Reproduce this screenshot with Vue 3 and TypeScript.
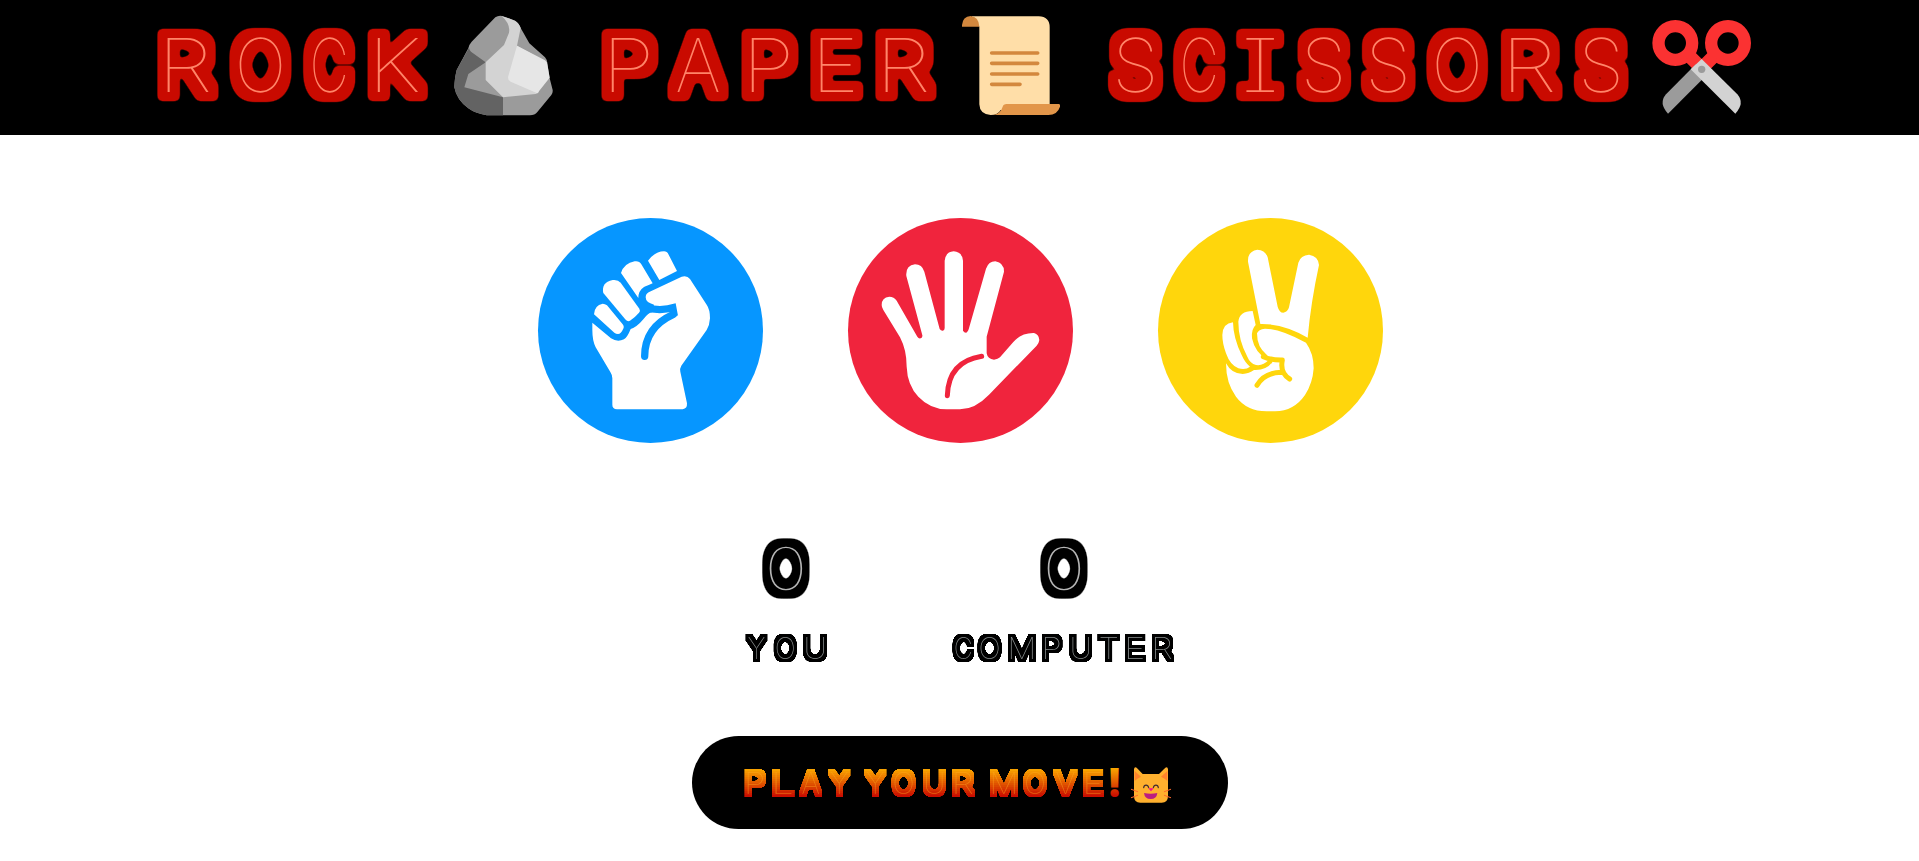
<script setup lang="ts">
interface Glyph { ch: string; x: number; len: number }
interface Word { box: string; w: number; h: number; size: number; base: number; glyphs: Glyph[] }

const ctx = document.createElement('canvas').getContext('2d')!

// Fits each thin letter into its [left, right] slot, leaving `pad` for the thick outline.
function fit(text: string, slots: number[][], size: number, base: number, pad: number, x: number, y: number, w: number, h: number): Word {
  ctx.font = `100 ${size}px Inter`
  let i = 0
  const glyphs = [...text].map((ch) => {
    if (ch === ' ') return { ch, x: 0, len: 0 }
    const [l, r] = slots[i++]
    const m = ctx.measureText(ch)
    if (ch === 'I') return { ch, x: l + pad - 5, len: r - l - pad * 2 + 10 }
    const ink = m.actualBoundingBoxRight + m.actualBoundingBoxLeft
    const k = (r - l - pad * 2) / ink
    return { ch, x: l + pad + m.actualBoundingBoxLeft * k, len: m.width * k }
  })
  return { box: `${x} ${y} ${w} ${h}`, w, h, size, base, glyphs }
}

const rock = fit('ROCK', [[157, 220], [229, 291.5], [303, 356], [367, 428.5]], 74, 92, 10.3, 150, 0, 298, 135)
const paper = fit('PAPER', [[601, 659], [667, 729], [741, 799], [810, 863.5], [875, 938]], 74, 92, 10.3, 590, 0, 366, 135)
const scissors = fit('SCISSORS', [[1107, 1163.5], [1173, 1226], [1235, 1285.5], [1295.5, 1351.5], [1360, 1416], [1426, 1488], [1500.5, 1564], [1573, 1629]], 74, 92, 10.3, 1100, 0, 546, 135)

const scores = [
  {
    name: 'you',
    value: fit('0', [[761, 811]], 59, 589.5, 8.4, 736, 530, 100, 76),
    label: fit('YOU', [[744, 769], [773, 798], [802, 828]], 30, 658.5, 3.6, 736, 626, 100, 44),
  },
  {
    name: 'computer',
    value: fit('0', [[1039, 1089]], 59, 589.5, 8.4, 944, 530, 240, 76),
    label: fit('COMPUTER', [[952, 975], [977, 1003], [1007, 1037], [1041, 1064], [1068, 1093], [1096, 1121], [1124, 1147], [1151, 1176]], 30, 658.5, 3.6, 944, 626, 240, 44),
  },
]

const message = fit('PLAY YOUR MOVE', [
  [743.7, 767.5], [771.5, 795], [798, 823.5], [826.5, 852],
  [862.5, 888], [891, 917], [921.5, 946.5], [951.5, 977],
  [989, 1019], [1022.5, 1048], [1052, 1079], [1082.5, 1105],
], 30, 793.5, 3.6, 736, 736, 392, 93)

// Horizontal colour bands, top to bottom, softened into one flame gradient.
const bands = Array.from({ length: 18 }, (_, i) => {
  const t = Math.min(1, Math.max(0, (i * 2 - 3) / 28))
  return { y: 765 + i * 2, color: `rgb(${Math.round(250 - 50 * t)}, ${Math.round(168 - 160 * t)}, 0)` }
})
</script>

<template>
  <main class="game">
    <svg class="defs" width="0" height="0" aria-hidden="true">
      <defs>
        <filter id="title" x="-10%" y="-30%" width="120%" height="160%" color-interpolation-filters="sRGB">
          <feMorphology in="SourceAlpha" operator="dilate" radius="8 7" />
          <feGaussianBlur stdDeviation="2" />
          <feComponentTransfer result="fat"><feFuncA type="linear" slope="7" intercept="-0.6" /></feComponentTransfer>
          <feFlood flood-color="#c90a00" />
          <feComposite in2="fat" operator="in" result="body" />
          <feMerge><feMergeNode in="body" /><feMergeNode in="SourceGraphic" /></feMerge>
        </filter>
        <filter id="digit" x="-50%" y="-30%" width="200%" height="160%" color-interpolation-filters="sRGB">
          <feMorphology in="SourceAlpha" operator="dilate" radius="5 6" />
          <feGaussianBlur stdDeviation="2.1" />
          <feComponentTransfer result="body"><feFuncA type="linear" slope="8" intercept="-0.6" /></feComponentTransfer>
          <feMerge><feMergeNode in="body" /><feMergeNode in="SourceGraphic" /></feMerge>
        </filter>
        <filter id="label" x="-20%" y="-30%" width="140%" height="160%" color-interpolation-filters="sRGB">
          <feMorphology in="SourceAlpha" operator="dilate" radius="3 3" />
          <feGaussianBlur stdDeviation="0.6" />
          <feComponentTransfer result="body"><feFuncA type="linear" slope="4" intercept="-0.5" /></feComponentTransfer>
          <feMerge><feMergeNode in="body" /><feMergeNode in="SourceGraphic" /></feMerge>
        </filter>
        <filter id="fire" filterUnits="userSpaceOnUse" x="736" y="760" width="392" height="44" color-interpolation-filters="sRGB">
          <feMorphology in="SourceAlpha" operator="dilate" radius="3 3" />
          <feGaussianBlur stdDeviation="0.6" />
          <feComponentTransfer result="mask"><feFuncA type="linear" slope="4" intercept="-0.5" /></feComponentTransfer>
          <feFlood v-for="(b, i) in bands" :key="b.y" x="736" :y="b.y" width="392" height="2" :flood-color="b.color" :result="`band${i}`" />
          <feMerge x="736" y="760" width="392" height="44"><feMergeNode v-for="(b, i) in bands" :key="b.y" :in="`band${i}`" /></feMerge>
          <feComposite in2="mask" operator="in" result="body" />
          <feFlood flood-color="#ffa51e" flood-opacity="0.5" />
          <feComposite in2="SourceAlpha" operator="in" result="line" />
          <feMerge><feMergeNode in="body" /><feMergeNode in="line" /></feMerge>
        </filter>
        <linearGradient id="flame" gradientUnits="userSpaceOnUse" x1="0" y1="768" x2="0" y2="797">
          <stop offset="0" stop-color="#faa800" />
          <stop offset="1" stop-color="#c80800" />
        </linearGradient>
      </defs>
    </svg>

    <header class="banner">
      <svg class="word" :width="rock.w" :height="rock.h" :viewBox="rock.box">
        <text class="title" :y="rock.base"><tspan v-for="(g, i) in rock.glyphs" :key="i" :x="g.x" :textLength="g.len" lengthAdjust="spacingAndGlyphs">{{ g.ch }}</tspan></text>
      </svg>
      <svg class="emoji rock" viewBox="924 24 330 336">
        <path fill="#9b9b9b" d="M1066 52Q1078 44 1092 50L1125 62Q1138 70 1142 84L1168 130L1215 172Q1221 178 1222 190L1229 235L1238 270Q1239 278 1234 285L1192 336Q1184 346 1170 346H1040Q1005 340 985 325Q950 300 943 262Q943 240 950 210L985 145Q988 132 995 125Z" />
        <path fill="#636363" d="M987 143Q988 150 993 155L1037 187L985 222L973 262H943Q943 235 950 210ZM943 262H973L1089 292V346H1040Q1005 340 985 325Q950 300 943 262Z" />
        <path fill="#d3d3d3" d="M1085 48L1092 50L1125 62Q1138 70 1142 84L1131 137L1222 188L1195 278L1187 282L1089 292L1037 240V187L1092 135L1107 98Q1112 72 1085 48Z" />
        <path fill="#e6e6e6" d="M1131 137L1215 181Q1221 185 1222 193L1229 233L1192 280L1112 245Q1102 240 1105 228Z" />
      </svg>
      <svg class="word paper-word" :width="paper.w" :height="paper.h" :viewBox="paper.box">
        <text class="title" :y="paper.base"><tspan v-for="(g, i) in paper.glyphs" :key="i" :x="g.x" :textLength="g.len" lengthAdjust="spacingAndGlyphs">{{ g.ch }}</tspan></text>
      </svg>
      <svg class="emoji" viewBox="1128 24 330 336">
        <path fill="#ffdea8" d="M1175 49H1376Q1409 50 1409 82V330H1262Q1254 345 1232 345Q1199 343 1198 313V80Z" />
        <path fill="#d3883e" d="M1146 80V75Q1148 50 1172 48Q1196 50 1198 80Z" />
        <path fill="#e2964a" d="M1241 345Q1262 340 1268 320Q1270 312 1280 312H1437Q1441 313 1440 320Q1432 345 1405 345Z" />
        <path stroke="#d3883e" stroke-width="11" stroke-linecap="round" d="M1235 159H1373M1235 190H1373M1235 222H1373M1235 253H1320" />
      </svg>
      <svg class="word scissors-word" :width="scissors.w" :height="scissors.h" :viewBox="scissors.box">
        <text class="title" :y="scissors.base"><tspan v-for="(g, i) in scissors.glyphs" :key="i" :x="g.x" :textLength="g.len" lengthAdjust="spacingAndGlyphs">{{ g.ch }}</tspan></text>
      </svg>
      <svg class="emoji" viewBox="618 24 330 336">
        <g fill="none" stroke="#fb3232" stroke-width="37">
          <circle cx="706" cy="129" r="50.5" /><circle cx="864" cy="129" r="50.5" />
          <path d="M748 168L790 210M822 168L780 210" stroke-width="40" />
        </g>
        <path fill="#9b9b9b" d="M768 192L678 283Q655 310 684 341L800 225Z" />
        <path fill="#d3d3d3" d="M785 177L892 283Q915 310 886 341L752 208Z" />
        <circle cx="785" cy="208" r="11" fill="#9b9b9b" />
      </svg>
    </header>

    <section class="choices">
      <button class="choice blue" aria-label="Rock">
        <svg viewBox="24 24 675 675">
          <g fill="#fff">
            <path d="M354 152Q375 124 402 124Q411 124 416 134L441 183L388 210Z" />
            <path d="M273 189Q282 160 314 154Q328 152 334 163L368 220Q350 228 342 231Q325 242 325 264Z" />
            <path d="M220 249Q213 218 248 210Q264 208 272 218L328 296Q332 302 327 308Q315 322 300 332Q293 336 287 329Z" />
            <path d="M192 313Q193 286 218 281Q225 281 231 286L278 343Q284 350 279 358Q273 372 264 372Q258 372 253 368Z" />
            <path d="M187 338L243 385Q262 398 282 388Q292 382 302 357Q320 352 340 328Q355 308 366 307L372 284Q347 278 347 262Q347 252 356 247L455 200Q471 195 480 207L530 284Q540 298 540 325Q539 345 530 360L454 467Q449 475 451 485L471 580Q472 596 458 598H261Q247 597 247 584V505Q247 495 241 486L197 412Q187 392 187 360Z" />
          </g>
          <path fill="#0696ff" d="M437 280L444 317L418 307Q392 312 355 307L358 281Q385 295 437 280Z" />
          <path fill="none" stroke="#0696ff" stroke-width="22" stroke-linecap="round" d="M430 313Q344 352 344 439" />
        </svg>
      </button>
      <button class="choice red" aria-label="Paper">
        <svg viewBox="24 24 675 675">
          <path fill="#fff" d="M125 285Q125 262 148 260Q162 260 170 272L232 380Q236 387 242 385Q248 382 247 376L199 198Q196 167 225 163Q246 163 253 185L299 357Q303 363 309 362Q314 360 314 354V152Q317 125 341 124Q367 126 369 152V362Q373 369 379 368Q384 366 386 358L438 176Q446 154 466 154Q492 158 492 185L440 380V430Q443 448 462 449Q474 448 480 442L520 396Q545 368 582 369Q597 373 598 390Q597 399 590 407L447 554Q406 597 360 598H320Q270 597 235 560Q202 525 200 470Q200 420 180 382L130 300Q125 292 125 285Z" />
          <path fill="none" stroke="#f0243d" stroke-width="15" stroke-linecap="round" d="M425 439Q325 455 322 557" />
        </svg>
      </button>
      <button class="choice yellow" aria-label="Scissors">
        <svg viewBox="24 24 675 675">
          <g fill="#fff">
            <path d="M331 342L294 155Q292 124 322 119Q346 120 353 142L383 290Q388 308 400 308Q413 307 417 292L445 158Q452 135 477 134Q505 138 507 165Q483 275 473 383Q400 340 331 342Z" />
            <path d="M265 335Q268 303 308 303L317 345Q303 358 306 385Q315 430 355 451Q340 468 318 465Q300 460 292 440Q265 390 265 335Z" />
            <path d="M217 375Q218 340 249 337Q250 385 275 435Q285 458 300 470Q288 480 265 475Q240 465 228 430Q217 400 217 375Z" />
            <path d="M228 460Q245 492 278 492Q298 491 312 480Q350 482 368 455L350 434Q321 412 321 370Q325 358 345 356Q390 356 468 398Q491 430 491 475Q488 520 465 555Q432 603 375 604H350Q290 603 258 560Q228 520 228 460Z" />
          </g>
          <path fill="none" stroke="#ffd60c" stroke-width="15" stroke-linecap="round" stroke-linejoin="round" d="M340 440Q365 451 397 450Q389 489 419 507M396 487Q343 487 321 526" />
        </svg>
      </button>
    </section>

    <section class="scores">
      <div v-for="s in scores" :key="s.name" class="score">
        <svg class="word" :width="s.value.w" :height="s.value.h" :viewBox="s.value.box">
          <text class="digit" :y="s.value.base"><tspan v-for="(g, i) in s.value.glyphs" :key="i" :x="g.x" :textLength="g.len" lengthAdjust="spacingAndGlyphs">{{ g.ch }}</tspan></text>
        </svg>
        <svg class="word label-word" :width="s.label.w" :height="s.label.h" :viewBox="s.label.box">
          <text class="label" :y="s.label.base"><tspan v-for="(g, i) in s.label.glyphs" :key="i" :x="g.x" :textLength="g.len" lengthAdjust="spacingAndGlyphs">{{ g.ch }}</tspan></text>
        </svg>
      </div>
    </section>

    <div class="message">
      <svg class="word" :width="message.w" :height="message.h" :viewBox="message.box">
        <text class="fire" :y="message.base"><template v-for="(g, i) in message.glyphs" :key="i"><tspan v-if="g.len" :x="g.x" :textLength="g.len" lengthAdjust="spacingAndGlyphs">{{ g.ch }}</tspan><tspan v-else>{{ g.ch }}</tspan></template></text>
        <text class="bang" x="1114.5" y="797" text-anchor="middle">!</text>
      </svg>
      <svg class="cat" viewBox="504 120 138 123">
        <path fill="#ffb02e" d="M522 133Q523 124 530 128L548 147H597L616 128Q623 124 624 133V213Q624 233 605 233H541Q522 233 522 213Z" />
        <path fill="#ff822d" d="M524 138L543 155Q531 160 524 168ZM622 138L603 155Q615 160 622 168Z" />
        <path fill="none" stroke="#402a32" stroke-width="3.5" stroke-linecap="round" d="M551 188C552 178 564 178 566 188M580 188C582 178 594 178 595 188" />
        <path fill="#f70a8d" d="M565 190H581L573 199Z" />
        <path fill="#bb1d80" d="M552 204Q572 209 592 204Q590 222 572 222Q554 222 552 204Z" />
        <path fill="none" stroke="#ff6a2d" stroke-width="3" stroke-linecap="round" d="M514 193L533 200M514 218L533 211M632 193L613 200M632 218L613 211" />
      </svg>
    </div>
  </main>
</template>

<style scoped>
.game { height: 861px; background: #fff; overflow: hidden; font-family: Inter, "Liberation Sans", sans-serif; }
.defs { position: absolute; }
.word { display: block; overflow: visible; flex: none; }
.word text { font-weight: 100; font-feature-settings: "cv08" 1; }
.title { font-size: 74px; fill: #ff8468; filter: url(#title); }
.digit { font-size: 59px; fill: #b5b5b5; filter: url(#digit); }
.label { font-size: 30px; fill: #8a8f8f; filter: url(#label); }
.fire { font-size: 30px; fill: #fff; filter: url(#fire); }
.word .bang { font-size: 39.5px; font-weight: 900; fill: url(#flame); }
.banner { display: flex; height: 135px; padding-left: 150px; background: #000; }
.emoji { display: block; flex: none; width: 110px; height: 112px; margin-top: 8px; }
.paper-word { margin-left: 32px; }
.scissors-word { margin-left: 34px; }
.choices { display: flex; gap: 85px; padding: 83px 0 0 538px; }
.choice { width: 225px; height: 225px; padding: 0; border: 0; border-radius: 50%; overflow: hidden; }
.choice svg { display: block; width: 225px; height: 225px; }
.blue { background: #0696ff; }
.red { background: #f0243d; }
.yellow { background: #ffd60c; }
.scores { display: flex; gap: 108px; padding: 87px 0 0 736px; }
.label-word { margin-top: 20px; }
.message { display: flex; box-sizing: border-box; width: 536px; height: 93px; margin: 66px 0 0 692px; padding-left: 44px; border-radius: 47px; background: #000; }
.cat { display: block; width: 46px; height: 41px; margin-top: 29px; }
</style>

<style>
body { margin: 0; background: #fff; }
</style>
